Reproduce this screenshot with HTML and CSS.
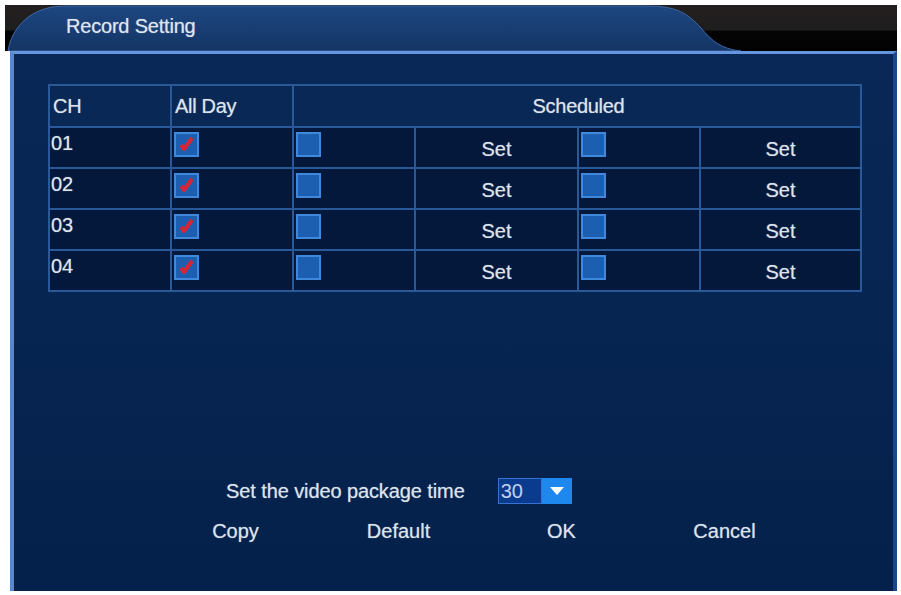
FILE: index.html
```html
<!DOCTYPE html>
<html>
<head>
<meta charset="utf-8">
<title>Record Setting</title>
<link rel="stylesheet" href="styles.css">
</head>
<body>
<div class="window">
  <div class="titlebar">
    <svg class="tab" width="892" height="46" viewBox="0 0 892 46">
      <defs>
        <linearGradient id="tabg" x1="0" y1="0" x2="0" y2="1">
          <stop offset="0" stop-color="#1d4680"/>
          <stop offset="1" stop-color="#143565"/>
        </linearGradient>
      </defs>
      <path d="M3 46 C7 22 26 1 60 1 L642 1 C673 1 683 9 696 23 C707 36 716 44 736 46 Z" fill="url(#tabg)" stroke="#3e68a8" stroke-width="1"/>
    </svg>
    <div class="title">Record Setting</div>
  </div>
  <div class="panel">
    <div class="grid">
      <div class="cell head">CH</div>
      <div class="cell head">All Day</div>
      <div class="cell head sched">Scheduled</div>

      <div class="cell num">01</div>
      <div class="cell box"><span class="chk on"><svg viewBox="0 0 21 21" width="21" height="21"><polyline points="5,11 8,15 16,4" fill="none" stroke="#d62636" stroke-width="4" stroke-linejoin="round"/></svg></span></div>
      <div class="cell box"><span class="chk"></span></div>
      <div class="cell set">Set</div>
      <div class="cell box"><span class="chk"></span></div>
      <div class="cell set">Set</div>

      <div class="cell num">02</div>
      <div class="cell box"><span class="chk on"><svg viewBox="0 0 21 21" width="21" height="21"><polyline points="5,11 8,15 16,4" fill="none" stroke="#d62636" stroke-width="4" stroke-linejoin="round"/></svg></span></div>
      <div class="cell box"><span class="chk"></span></div>
      <div class="cell set">Set</div>
      <div class="cell box"><span class="chk"></span></div>
      <div class="cell set">Set</div>

      <div class="cell num">03</div>
      <div class="cell box"><span class="chk on"><svg viewBox="0 0 21 21" width="21" height="21"><polyline points="5,11 8,15 16,4" fill="none" stroke="#d62636" stroke-width="4" stroke-linejoin="round"/></svg></span></div>
      <div class="cell box"><span class="chk"></span></div>
      <div class="cell set">Set</div>
      <div class="cell box"><span class="chk"></span></div>
      <div class="cell set">Set</div>

      <div class="cell num">04</div>
      <div class="cell box"><span class="chk on"><svg viewBox="0 0 21 21" width="21" height="21"><polyline points="5,11 8,15 16,4" fill="none" stroke="#d62636" stroke-width="4" stroke-linejoin="round"/></svg></span></div>
      <div class="cell box"><span class="chk"></span></div>
      <div class="cell set">Set</div>
      <div class="cell box"><span class="chk"></span></div>
      <div class="cell set">Set</div>
    </div>

    <div class="package">
      <span class="label">Set the video package time</span>
      <div class="select">
        <span class="val">30</span>
        <span class="arrow"><svg width="14" height="8" viewBox="0 0 14 8"><polygon points="0,0 14,0 7,8" fill="#ffffff"/></svg></span>
      </div>
    </div>

    <div class="buttons">
      <div class="btn">Copy</div>
      <div class="btn">Default</div>
      <div class="btn">OK</div>
      <div class="btn">Cancel</div>
    </div>
  </div>
</div>
</body>
</html>
```

FILE: styles.css
```css
html, body {
  margin: 0;
  padding: 0;
  background: #ffffff;
}
body {
  font-family: "Liberation Sans", Arial, sans-serif;
  font-size: 20px;
  color: #dde3ec;
  text-shadow: 0 0 1px rgba(220, 228, 240, 0.6);
}
.window {
  margin: 5px 4px 4px 5px;
  width: 892px;
  height: 586px;
  display: flex;
  flex-direction: column;
}
.titlebar {
  position: relative;
  height: 46px;
  flex: none;
  background: linear-gradient(#241f1f 0, #1e1e1e 55%, #040404 56%, #020202 100%);
}
.tab {
  position: absolute;
  left: 0;
  top: 0;
}
.title {
  position: relative;
  padding: 9px 0 0 61px;
  line-height: 24px;
  color: #dfe5ef;
  letter-spacing: -0.2px;
}
.panel {
  flex: 1;
  margin-left: 5px;
  border-top: 3px solid #6396de;
  border-left: 4px solid #5687d0;
  border-right: 4px solid #18478c;
  background: linear-gradient(#0a2857, #03214a);
  display: flex;
  flex-direction: column;
  align-items: flex-start;
}
.grid {
  margin: 30px 0 0 34px;
  display: grid;
  grid-template-columns: 120px 120px 120px 161px 120px 159px;
  grid-template-rows: 40px repeat(4, 39px);
  gap: 2px;
  padding: 2px;
  background: #2a5999;
}
.cell {
  background: #03183b;
  line-height: 20px;
  box-sizing: border-box;
}
.head {
  background: #092856;
  display: flex;
  align-items: center;
  padding-left: 3px;
  letter-spacing: -0.3px;
}
.sched {
  grid-column: span 4;
  justify-content: center;
}
.num {
  padding: 5px 0 0 1px;
}
.box {
  padding: 4px 0 0 2px;
}
.chk {
  display: block;
  width: 25px;
  height: 25px;
  box-sizing: border-box;
  border: 2px solid #3f88dc;
  background: #1c5fb0;
}
.chk svg {
  display: block;
}
.set {
  display: flex;
  align-items: center;
  justify-content: center;
  padding-top: 2px;
}
.package {
  margin-top: 186px;
  padding-left: 212px;
  height: 26px;
  display: flex;
  align-items: center;
}
.label {
  margin-right: 33px;
  line-height: 26px;
  letter-spacing: -0.1px;
}
.select {
  display: flex;
  width: 74px;
  height: 26px;
  text-shadow: none;
}
.val {
  width: 44px;
  box-sizing: border-box;
  border: 1px solid #3473d4;
  background: #0b3b8e;
  color: #c3d2ee;
  line-height: 24px;
  padding-left: 2px;
}
.arrow {
  flex: 1;
  background: #1f88ef;
  display: flex;
  align-items: center;
  justify-content: center;
}
.arrow svg {
  display: block;
}
.buttons {
  margin-top: 14px;
  padding-left: 140px;
  display: flex;
}
.btn {
  width: 163px;
  text-align: center;
  line-height: 26px;
}
```
